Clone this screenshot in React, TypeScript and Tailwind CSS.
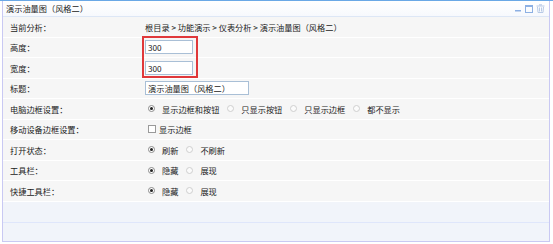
const font = { fontFamily: '"Noto Sans CJK SC", "Liberation Sans", sans-serif' };

const Radio = ({ checked }: { checked?: boolean }) => (
  <span
    className={`inline-flex size-[7px] shrink-0 items-center justify-center rounded-full border ${
      checked ? 'border-[#8a8a8a] bg-white' : 'border-[#cfcfcf] bg-[#fbfbfb]'
    }`}
  >
    {checked && <span className="size-[3px] rounded-full bg-[#222]" />}
  </span>
);

const RadioGroup = ({ options, selected }: { options: string[]; selected: number }) => (
  <div className="flex items-center">
    {options.map((o, i) => (
      <span key={o} className="mr-[8px] flex items-center">
        <Radio checked={i === selected} />
        <span className="ml-[7px]">{o}</span>
      </span>
    ))}
  </div>
);

const Row = ({ label, children }: { label: string; children?: React.ReactNode }) => (
  <div className="grid h-[20.5px] grid-cols-[142px_1fr] items-center border-b border-white bg-[#f6f6f6]">
    <div className="pl-[7px]">{label}</div>
    <div className="flex items-center">{children}</div>
  </div>
);

const TextBox = ({ value, w }: { value: string; w: string }) => (
  <div className={`flex h-[14px] items-center border border-[#a9bfd6] bg-white px-[2px] ${w}`}>{value}</div>
);

export default function App() {
  return (
    <div className="h-[244px] w-[553px] overflow-hidden bg-white text-[8.2px] leading-none text-[#1a1a1a]" style={font}>
      <div className="h-px w-full bg-[#6aa8e6]" />
      <div className="ml-[2px] w-[548px] border-x border-b border-[#c9c9f3]">
        <div className="flex h-[16px] items-center justify-between border-b border-[#dde7f6] bg-gradient-to-b from-white to-[#f7f9fd] pl-[3px] pr-[4px]">
          <span>演示油量图（风格二）</span>
          <div className="flex items-center gap-[3px] text-[#8db0e3]">
            <svg width="8" height="8" viewBox="0 0 8 8">
              <rect x="1" y="5" width="6" height="1.5" fill="currentColor" />
            </svg>
            <svg width="8" height="8" viewBox="0 0 8 8">
              <rect x="0.5" y="0.5" width="7" height="7" fill="none" stroke="currentColor" />
              <rect x="0.5" y="0.5" width="7" height="1.5" fill="currentColor" />
            </svg>
            <svg width="9" height="9" viewBox="0 0 9 9" className="text-[#b8cae6]">
              <rect x="0.5" y="1.5" width="8" height="1" fill="currentColor" />
              <rect x="3" y="0.3" width="3" height="1.2" fill="currentColor" />
              <path d="M1.5 2.8 L2 8.5 H7 L7.5 2.8" fill="none" stroke="currentColor" />
              <path d="M3.5 3.5 V7.5 M5.5 3.5 V7.5" stroke="currentColor" />
            </svg>
          </div>
        </div>
        <Row label="当前分析：">
          <span>根目录 &gt; 功能演示 &gt; 仪表分析 &gt; 演示油量图（风格二）</span>
        </Row>
        <div className="relative">
          <Row label="高度：">
            <TextBox value="300" w="w-[48px]" />
          </Row>
          <Row label="宽度：">
            <TextBox value="300" w="w-[48px]" />
          </Row>
          <div className="pointer-events-none absolute left-[139px] top-[-2px] h-[42px] w-[56px] border-2 border-[#e0383a]" />
        </div>
        <Row label="标题：">
          <TextBox value="演示油量图（风格二）" w="w-[104px]" />
        </Row>
        <Row label="电脑边框设置：">
          <span className="ml-[3px]">
            <RadioGroup options={['显示边框和按钮', '只显示按钮', '只显示边框', '都不显示']} selected={0} />
          </span>
        </Row>
        <Row label="移动设备边框设置：">
          <span className="ml-[3px] flex items-center">
            <span className="size-[8px] border border-[#9a9a9a] bg-white" />
            <span className="ml-[3px]">显示边框</span>
          </span>
        </Row>
        <Row label="打开状态：">
          <span className="ml-[3px]">
            <RadioGroup options={['刷新', '不刷新']} selected={0} />
          </span>
        </Row>
        <Row label="工具栏：">
          <span className="ml-[3px]">
            <RadioGroup options={['隐藏', '展现']} selected={0} />
          </span>
        </Row>
        <Row label="快捷工具栏：">
          <span className="ml-[3px]">
            <RadioGroup options={['隐藏', '展现']} selected={0} />
          </span>
        </Row>
        <div className="h-[21px] border-b border-[#dfe6fb] bg-[#f1f4fa]" />
        <div className="h-[18px] bg-[#f1f4fa]" />
      </div>
    </div>
  );
}
